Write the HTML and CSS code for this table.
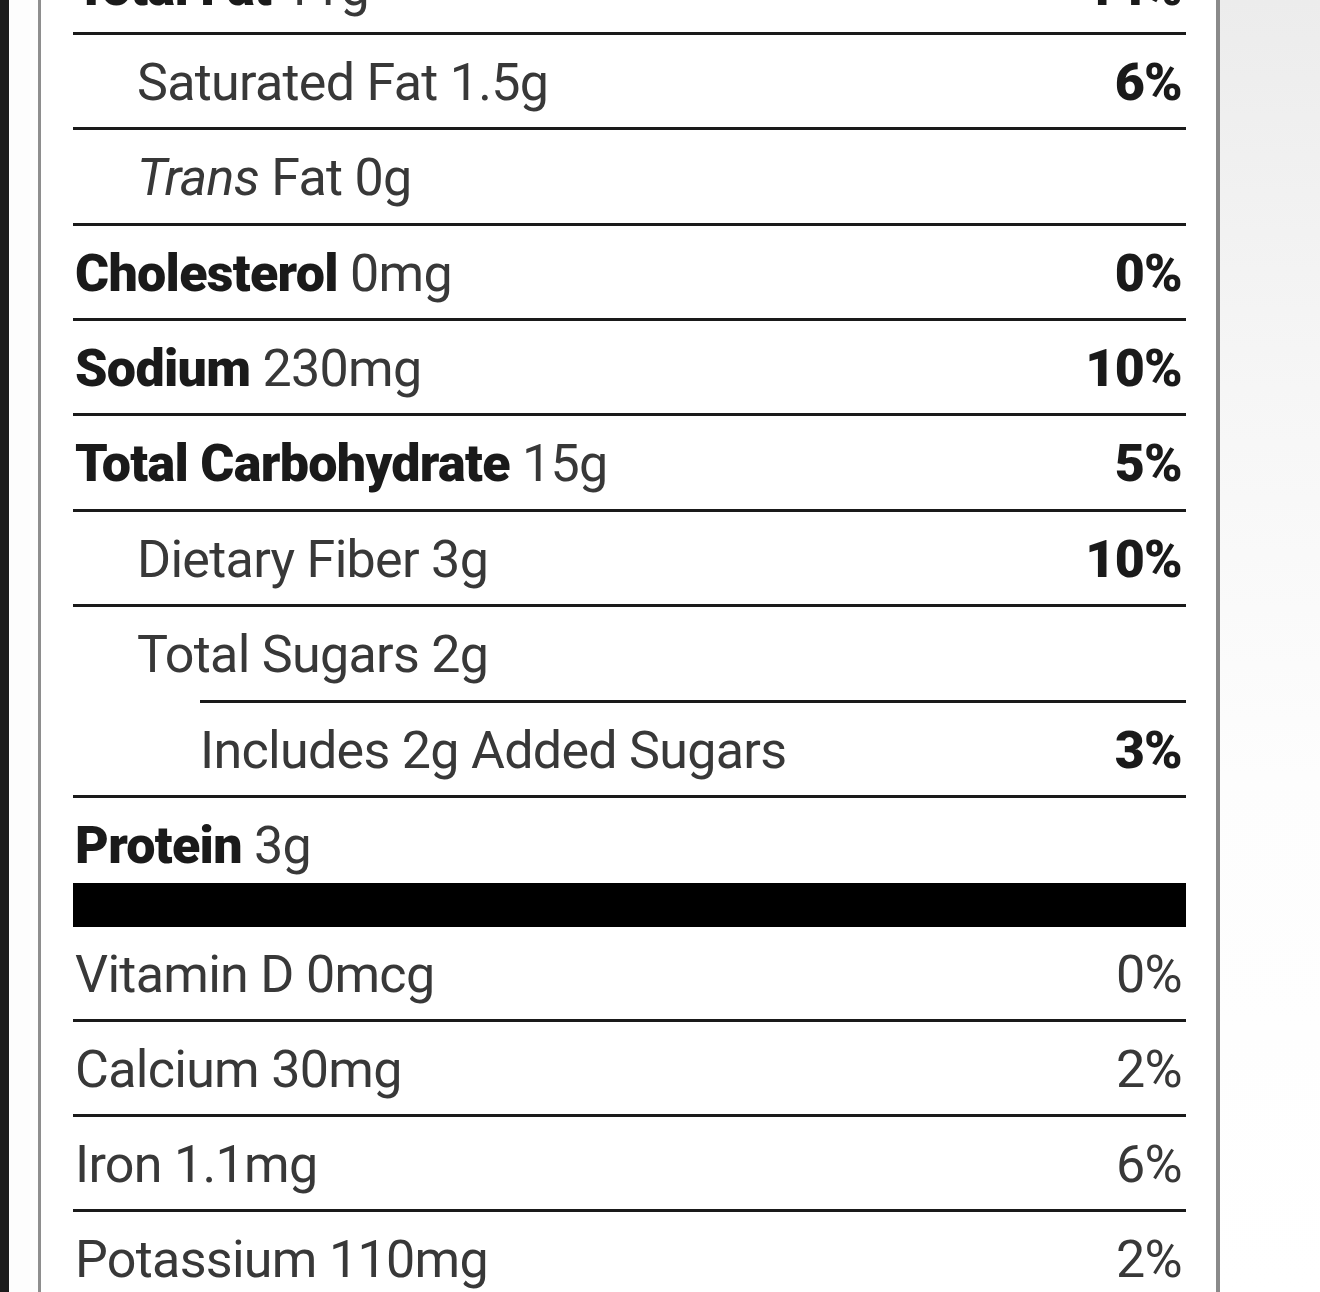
FILE: index.html
```html
<!DOCTYPE html>
<html lang="en">
<head>
<meta charset="utf-8">
<title>Nutrition Facts</title>
<link rel="stylesheet" href="styles.css">
</head>
<body>
<div class="page">
  <div class="edge"></div>
  <div class="gutter"></div>
  <section class="panel">
    <div class="label">
      <div class="row"><span class="name"><b>Total Fat</b> 11g</span><b class="dv">14%</b></div>
      <div class="row sub"><span class="name">Saturated Fat 1.5g</span><b class="dv">6%</b></div>
      <div class="row sub"><span class="name"><i>Trans</i> Fat 0g</span></div>
      <div class="row"><span class="name"><b>Cholesterol</b> 0mg</span><b class="dv">0%</b></div>
      <div class="row"><span class="name"><b>Sodium</b> 230mg</span><b class="dv">10%</b></div>
      <div class="row"><span class="name"><b>Total Carbohydrate</b> 15g</span><b class="dv">5%</b></div>
      <div class="row sub"><span class="name">Dietary Fiber 3g</span><b class="dv">10%</b></div>
      <div class="row sub sugars"><span class="name">Total Sugars 2g</span></div>
      <div class="row added"><span class="name">Includes 2g Added Sugars</span><b class="dv">3%</b></div>
      <div class="row protein"><span class="name"><b>Protein</b> 3g</span></div>
      <div class="thick"></div>
      <div class="row vit"><span class="name">Vitamin D 0mcg</span><span class="dv">0%</span></div>
      <div class="row vit"><span class="name">Calcium 30mg</span><span class="dv">2%</span></div>
      <div class="row vit"><span class="name">Iron 1.1mg</span><span class="dv">6%</span></div>
      <div class="row vit"><span class="name">Potassium 110mg</span><span class="dv">2%</span></div>
    </div>
  </section>
  <div class="side"></div>
</div>
</body>
</html>
```

FILE: styles.css
```css
html, body {
  margin: 0;
  padding: 0;
  height: 100%;
  overflow: hidden;
  background: #fff;
}

.page {
  display: flex;
  height: 1292px;
  font-family: Roboto, "Liberation Sans", sans-serif;
  color: #333;
}

.edge {
  width: 9px;
  background: #1c1c1c;
}

.gutter {
  width: 29px;
  background: #fdfdfd;
}

.panel {
  width: 1113px;
  border-left: 3px solid #8e8e8e;
  border-right: 4px solid #8a8a8a;
  background: #fff;
  padding: 0 30px 0 32px;
  box-sizing: content-box;
  overflow: hidden;
}

.label {
  margin-top: -60.4px;
}

.row {
  display: flex;
  justify-content: space-between;
  align-items: flex-start;
  box-sizing: border-box;
  height: 95.375px;
  padding: 22px 4px 0 2px;
  border-bottom: 3px solid #1a1a1a;
  font-size: 52px;
  line-height: 52px;
  letter-spacing: -0.7px;
  white-space: nowrap;
}

.row b {
  font-weight: 900;
  color: #1a1a1a;
}

.row .name {
  color: #383838;
}

.row i {
  font-style: italic;
}

.row.sub .name {
  padding-left: 62px;
}

.row.sugars {
  border-bottom: none;
  background: linear-gradient(#1a1a1a, #1a1a1a) no-repeat right bottom / calc(100% - 127px) 3px;
}

.row.added .name {
  padding-left: 125px;
}

.row.protein {
  height: 85px;
  border-bottom: none;
}

.thick {
  height: 44px;
  background: #000;
}

.row.vit {
  height: 95px;
}

.row.vit .dv {
  color: #383838;
}

.side {
  flex: 1;
  background: linear-gradient(180deg, #ececec 0%, #f6f6f6 30%, #fdfdfd 60%, #ffffff 100%);
}
```
